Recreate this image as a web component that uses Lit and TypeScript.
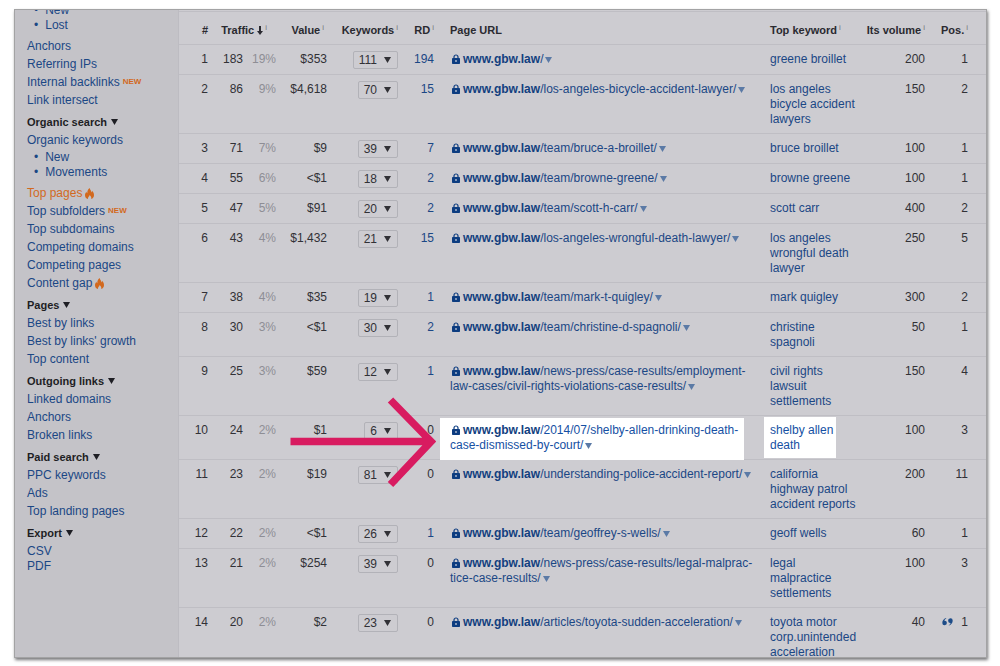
import { LitElement, html, css, svg, nothing } from "lit";
import { customElement } from "lit/decorators.js";

interface PageRow {
  traffic: number;
  share: string;
  value: string;
  keywords: number;
  rd: number;
  path: string[];
  keyword: string[];
  volume: number;
  pos: number;
  marked?: boolean;
  snippet?: boolean;
}

const row = (
  traffic: number, share: string, value: string, keywords: number, rd: number,
  path: string[], keyword: string[], volume: number, pos: number,
  extra: Partial<PageRow> = {},
): PageRow => ({ traffic, share, value, keywords, rd, path, keyword, volume, pos, ...extra });

const ROWS: PageRow[] = [
  row(183, "19%", "$353", 111, 194, ["/"], ["greene broillet"], 200, 1),
  row(86, "9%", "$4,618", 70, 15, ["/los-angeles-bicycle-accident-lawyer/"], ["los angeles", "bicycle accident", "lawyers"], 150, 2),
  row(71, "7%", "$9", 39, 7, ["/team/bruce-a-broillet/"], ["bruce broillet"], 100, 1),
  row(55, "6%", "<$1", 18, 2, ["/team/browne-greene/"], ["browne greene"], 100, 1),
  row(47, "5%", "$91", 20, 2, ["/team/scott-h-carr/"], ["scott carr"], 400, 2),
  row(43, "4%", "$1,432", 21, 15, ["/los-angeles-wrongful-death-lawyer/"], ["los angeles", "wrongful death", "lawyer"], 250, 5),
  row(38, "4%", "$35", 19, 1, ["/team/mark-t-quigley/"], ["mark quigley"], 300, 2),
  row(30, "3%", "<$1", 30, 2, ["/team/christine-d-spagnoli/"], ["christine", "spagnoli"], 50, 1),
  row(25, "3%", "$59", 12, 1, ["/news-press/case-results/employment-", "law-cases/civil-rights-violations-case-results/"], ["civil rights", "lawsuit", "settlements"], 150, 4),
  row(24, "2%", "$1", 6, 0, ["/2014/07/shelby-allen-drinking-death-", "case-dismissed-by-court/"], ["shelby allen", "death"], 100, 3, { marked: true }),
  row(23, "2%", "$19", 81, 0, ["/understanding-police-accident-report/"], ["california", "highway patrol", "accident reports"], 200, 11),
  row(22, "2%", "<$1", 26, 1, ["/team/geoffrey-s-wells/"], ["geoff wells"], 60, 1),
  row(21, "2%", "$254", 39, 0, ["/news-press/case-results/legal-malprac-", "tice-case-results/"], ["legal", "malpractice", "settlements"], 100, 3),
  row(20, "2%", "$2", 23, 0, ["/articles/toyota-sudden-acceleration/"], ["toyota motor", "corp.unintended", "acceleration"], 40, 1, { snippet: true }),
];

interface NavItem {
  label: string;
  tag?: "new" | "fire";
  current?: boolean;
  sub?: string[];
}
interface NavGroup {
  title?: string;
  tight?: boolean;
  items: NavItem[];
}

const NAV: NavGroup[] = [
  { items: [{ label: "Anchors" }, { label: "Referring IPs" }, { label: "Internal backlinks", tag: "new" }, { label: "Link intersect" }] },
  {
    title: "Organic search",
    items: [
      { label: "Organic keywords", sub: ["New", "Movements"] },
      { label: "Top pages", tag: "fire", current: true },
      { label: "Top subfolders", tag: "new" },
      { label: "Top subdomains" },
      { label: "Competing domains" },
      { label: "Competing pages" },
      { label: "Content gap", tag: "fire" },
    ],
  },
  { title: "Pages", items: [{ label: "Best by links" }, { label: "Best by links' growth" }, { label: "Top content" }] },
  { title: "Outgoing links", items: [{ label: "Linked domains" }, { label: "Anchors" }, { label: "Broken links" }] },
  { title: "Paid search", items: [{ label: "PPC keywords" }, { label: "Ads" }, { label: "Top landing pages" }] },
  { title: "Export", tight: true, items: [{ label: "CSV" }, { label: "PDF" }] },
];

const caret = svg`<path d="M0 0h7L3.5 6z" fill="currentColor"/>`;
const caretIcon = html`<svg class="caret" viewBox="0 0 7 6" aria-hidden="true">${caret}</svg>`;

const lockIcon = html`<svg class="lock" viewBox="0 0 8 10" aria-hidden="true">
  <path d="M2 5V3a2 2 0 0 1 4 0v2" fill="none" stroke="currentColor" stroke-width="1.2"/>
  <rect x="0" y="4" width="8" height="6" rx="0.8" fill="currentColor"/>
  <circle cx="4" cy="7" r="0.9" fill="#b9c2d2"/>
</svg>`;

const fireIcon = html`<svg class="fire" viewBox="0 0 9 11" aria-hidden="true">
  <path d="M4.6 0C5 2 6.4 2.8 6.6 4.4C7 4 7.2 3.4 7.1 2.8C8.3 3.9 9 5.4 9 7C9 9 8 10.4 6.2 11C6.7 9.6 6 8.2 4.6 7C4.6 8.2 2.6 9.2 3 11C1.1 10.5 0 9 0 7.2C0 5.6 0.8 4.6 1.4 3.8C1.5 4.6 1.8 5.1 2.3 5.3C2.2 3.2 3 1.2 4.6 0Z" fill="currentColor"/>
</svg>`;

const quoteIcon = html`<svg class="quote" viewBox="0 0 11 8" role="img" aria-label="Featured snippet">
  <path d="M4 0C1.7 0.8 0.3 2.6 0.3 5A2.3 2.3 0 1 0 2.4 2.7C2.5 1.9 3.1 1.1 4.3 0.6Z" fill="currentColor"/>
  <path d="M7 7.6C9.3 6.8 10.7 5 10.7 2.6A2.3 2.3 0 1 0 8.6 4.9C8.5 5.7 7.9 6.5 6.7 7Z" fill="currentColor"/>
</svg>`;

const arrowIcon = html`<svg class="arrow" viewBox="0 0 148 96" aria-hidden="true">
  <path d="M2.5 47.5H142M102.5 6L143 47.5L102.5 90.5" fill="none" stroke="#d81b60" stroke-width="7.5"/>
</svg>`;

const sortIcon = html`<svg class="sort" viewBox="0 0 6 9" aria-hidden="true">
  <path d="M2 0h2v5h2L3 9L0 5h2z" fill="currentColor"/>
</svg>`;

const info = html`<sup class="info">i</sup>`;

@customElement("app-root")
export class AppRoot extends LitElement {
  static styles = css`
    :host {
      --link: #1b4785;
      --line: #bfbec4;
      display: flex;
      box-sizing: border-box;
      height: 100vh;
      padding: 10px 14px 9px 15px;
      background: #fff;
      color: #313136;
      font: 12px/15px "Liberation Sans", Arial, sans-serif;
    }
    .frame {
      flex: 1;
      min-width: 0;
      display: grid;
      grid-template-columns: 164px minmax(0, 1fr);
      overflow: hidden;
      background: #cdccd1;
      box-shadow: 0 0 0 1px #a3a3a4, 1px 2px 3px 1px #77777a;
    }
    a { color: var(--link); text-decoration: none; }
    button { font: inherit; color: inherit; margin: 0; cursor: pointer; }
    ul { list-style: none; margin: 0; padding: 0; }

    .side {
      background: #c4c3c8;
      border-right: 1px solid #bdbcc2;
      padding-left: 12px;
      line-height: 18px;
      overflow: hidden;
      white-space: nowrap;
    }
    .scrolled { margin-top: -8px; }
    .group { margin-bottom: 4px; }
    .title {
      display: flex;
      align-items: center;
      gap: 4px;
      padding: 0;
      border: 0;
      background: none;
      font-size: 11px;
      font-weight: 700;
      line-height: 18px;
      color: #1e1e24;
    }
    .sub { padding: 1px 0 4px 7px; line-height: 15px; }
    .sub li { display: flex; gap: 7px; color: var(--link); }
    .sub li::before { content: "•"; }
    .tight .item { line-height: 15px; }
    .tight .item:first-child { padding-top: 2px; }
    .current { color: #d2691e; }
    .new {
      margin-left: 3px;
      font-size: 8px;
      line-height: 8px;
      font-weight: 700;
      color: #d2691e;
      vertical-align: 2px;
    }
    .fire { width: 9px; height: 11px; margin-left: 3px; color: #d2691e; vertical-align: -2px; }
    .caret { width: 7px; height: 6px; flex: none; }

    .main { overflow: hidden; padding-top: 1px; }
    table {
      width: 100%;
      table-layout: fixed;
      border-collapse: separate;
      border-spacing: 0;
      border-top: 1px solid var(--line);
    }
    .c-num { width: 37px; }
    .c-traffic { width: 35px; }
    .c-share { width: 33px; }
    .c-value { width: 51px; }
    .c-keywords { width: 71px; }
    .c-rd { width: 36px; }
    .c-keyword { width: 99px; }
    .c-volume { width: 72px; }
    .c-pos { width: 53px; }
    th, td {
      border-bottom: 1px solid var(--line);
      padding: 7px 8px 6px 0;
      text-align: right;
      vertical-align: top;
      white-space: nowrap;
    }
    th { padding-top: 10px; color: #2a2a30; font-size: 11px; line-height: 16px; font-weight: 700; }
    .text { text-align: left; padding-left: 8px; }
    .h-traffic { padding-right: 17px; }
    .h-value { padding-right: 11px; }
    .url { padding-right: 18px; }
    .pos { padding-right: 18px; }
    .share { color: #8e8e95; }
    .info {
      margin-left: 2px;
      font-size: 8px;
      line-height: 8px;
      font-weight: 400;
      vertical-align: 4px;
      color: #77777e;
    }
    .sort { width: 6px; height: 9px; margin-left: 3px; vertical-align: -1px; }
    .kw { padding-top: 6px; padding-bottom: 5px; line-height: 0; }
    .count {
      display: inline-flex;
      align-items: center;
      gap: 7px;
      box-sizing: border-box;
      height: 18px;
      padding: 0 6px 0 5px;
      border: 1px solid #b2b2b8;
      border-radius: 2px;
      background: none;
      line-height: 16px;
    }
    .host { font-weight: 700; color: #123f7f; }
    .lock { width: 8px; height: 10px; margin: 0 3px 0 2px; vertical-align: -1px; color: #0c3c80; }
    .more {
      display: inline-block;
      padding: 0;
      border: 0;
      margin-left: 2px;
      background: none;
      color: #5b7aa6;
      line-height: 6px;
    }
    .more .caret { width: 7px; height: 6px; vertical-align: 0; }
    .quote { width: 11px; height: 8px; margin-right: 8px; color: #1d4c88; }
    .mark { --link: #1550a3; position: relative; z-index: 1; background: #fff; }
    .mark-url { margin: -5px 0 -7px -10px; padding: 5px 0 7px 10px; }
    .mark-key { display: inline-block; margin: -6px -6px -5px; padding: 6px 3px 5px 6px; }
    .arrow { position: absolute; right: calc(100% + 4px); top: -24px; width: 148px; height: 96px; }
  `;

  private item(i: NavItem) {
    return html`<li class="item">
      <a class=${i.current ? "current" : ""} href="#">${i.label}</a>${i.tag === "new"
        ? html`<span class="new">NEW</span>`
        : i.tag === "fire" ? fireIcon : nothing}
      ${i.sub ? this.sub(i.sub) : nothing}
    </li>`;
  }

  private sub(labels: string[]) {
    return html`<ul class="sub">${labels.map((l) => html`<li><a href="#">${l}</a></li>`)}</ul>`;
  }

  private lines(parts: string[]) {
    return parts.map((p, n) => (n ? html`<br />${p}` : p));
  }

  private row(r: PageRow, n: number) {
    const url = html`<a href="#">${lockIcon}<span class="host">www.gbw.law</span>${this.lines(r.path)}</a><button class="more" aria-label="Page actions">${caretIcon}</button>`;
    const keyword = html`<a href="#">${this.lines(r.keyword)}</a>`;
    return html`<tr>
      <td>${n + 1}</td>
      <td>${r.traffic}</td>
      <td class="share">${r.share}</td>
      <td>${r.value}</td>
      <td class="kw"><button class="count">${r.keywords}${caretIcon}</button></td>
      <td>${r.rd ? html`<a href="#">${r.rd}</a>` : r.rd}</td>
      <td class="text url">${r.marked ? html`<div class="mark mark-url">${url}${arrowIcon}</div>` : url}</td>
      <td class="text">${r.marked ? html`<div class="mark mark-key">${keyword}</div>` : keyword}</td>
      <td>${r.volume}</td>
      <td class="pos">${r.snippet ? quoteIcon : nothing}${r.pos}</td>
    </tr>`;
  }

  render() {
    return html`<div class="frame">
      <nav class="side">
        <div class="scrolled">${this.sub(["New", "Lost"])}</div>
        ${NAV.map((g) => html`<div class="group ${g.tight ? "tight" : ""}">
          ${g.title ? html`<button class="title">${g.title}${caretIcon}</button>` : nothing}
          <ul>${g.items.map((i) => this.item(i))}</ul>
        </div>`)}
      </nav>
      <main class="main">
        <table>
          <colgroup>
            <col class="c-num" /><col class="c-traffic" /><col class="c-share" /><col class="c-value" />
            <col class="c-keywords" /><col class="c-rd" /><col /><col class="c-keyword" />
            <col class="c-volume" /><col class="c-pos" />
          </colgroup>
          <thead>
            <tr>
              <th>#</th>
              <th class="h-traffic" colspan="2">Traffic${sortIcon}${info}</th>
              <th class="h-value">Value${info}</th>
              <th>Keywords${info}</th>
              <th>RD${info}</th>
              <th class="text">Page URL</th>
              <th class="text">Top keyword${info}</th>
              <th>Its volume${info}</th>
              <th class="pos">Pos.${info}</th>
            </tr>
          </thead>
          <tbody>${ROWS.map((r, n) => this.row(r, n))}</tbody>
        </table>
      </main>
    </div>`;
  }
}
